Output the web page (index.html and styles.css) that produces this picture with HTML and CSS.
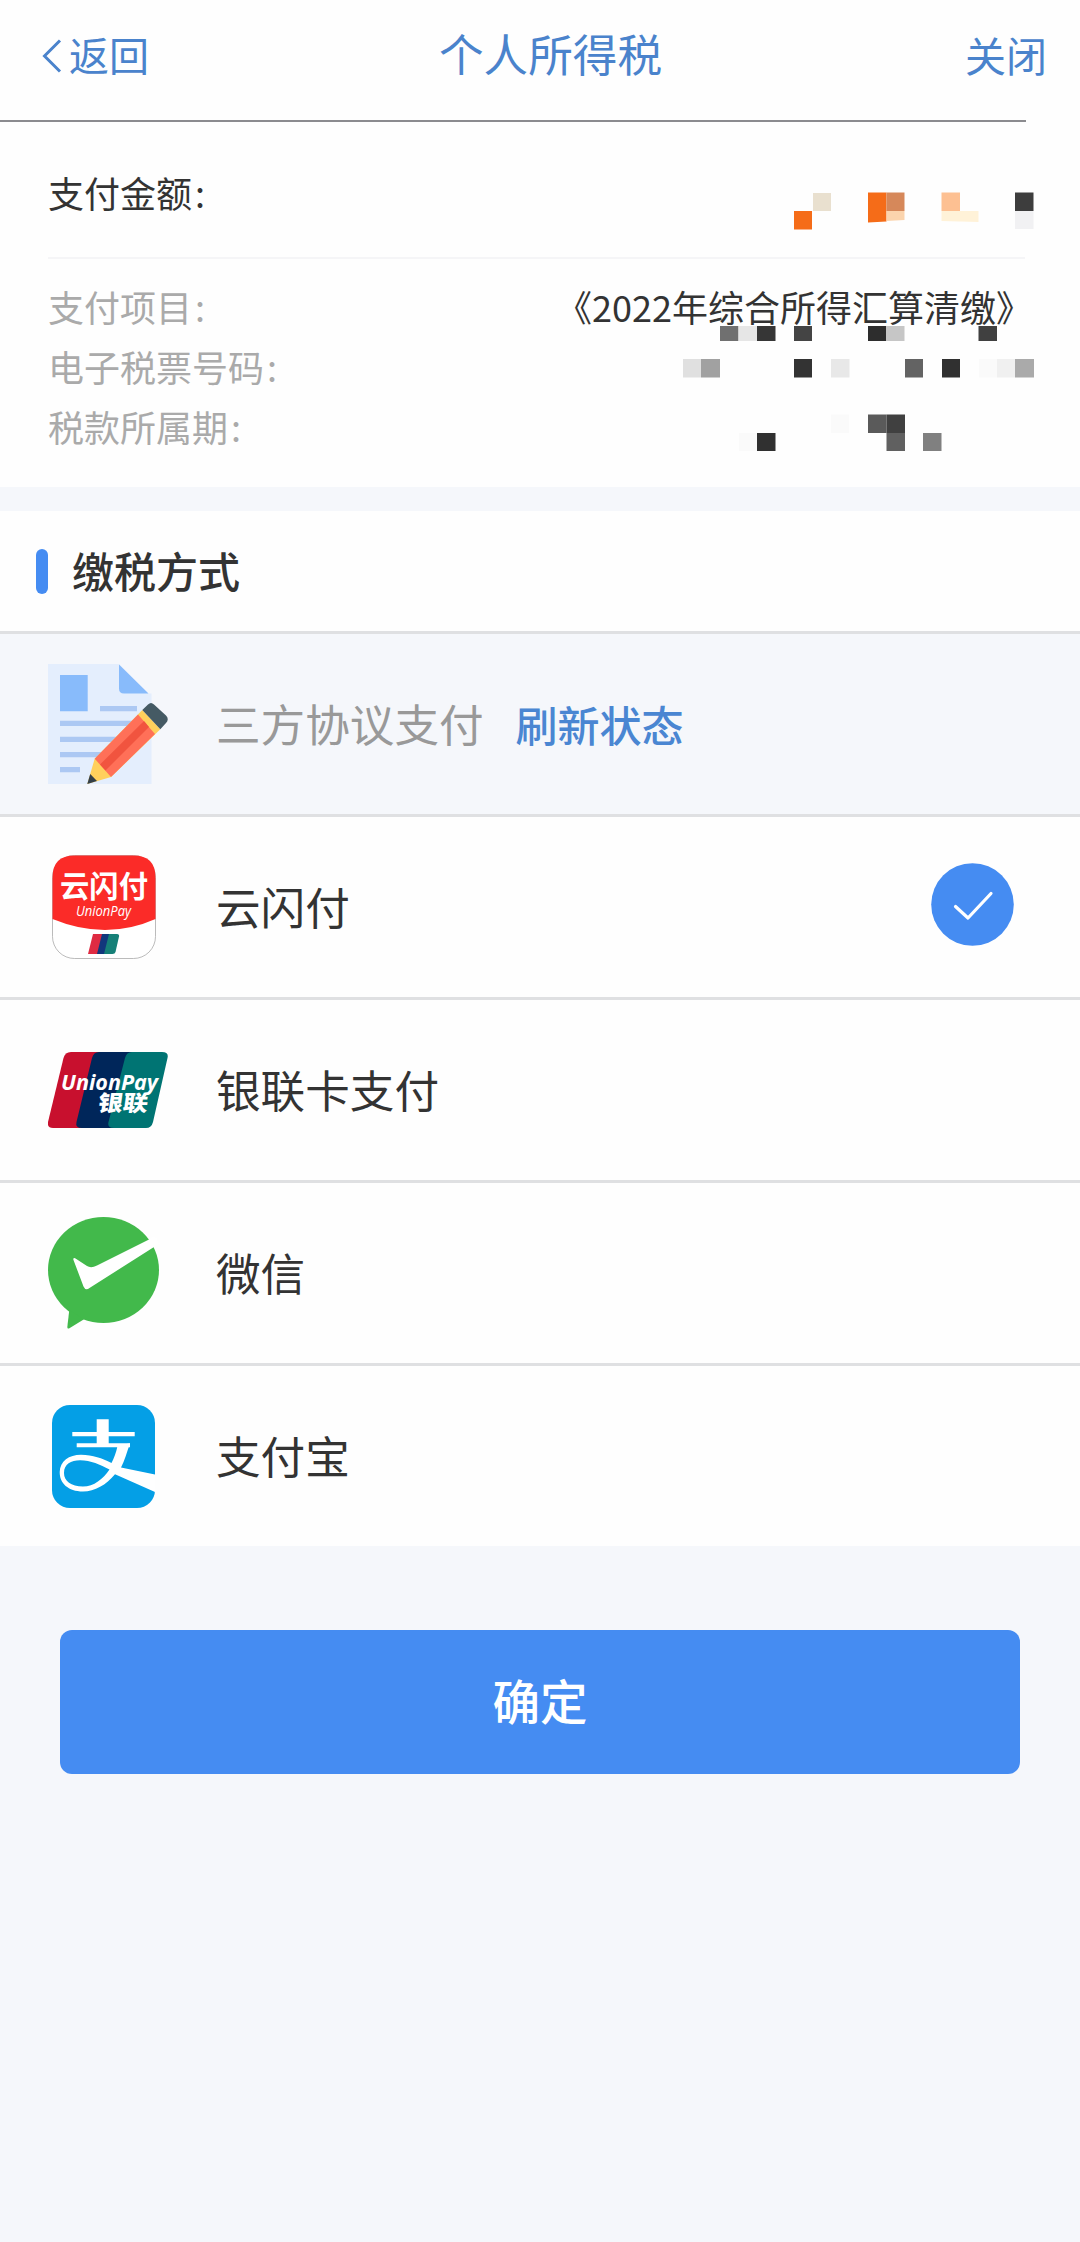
FILE: index.html
```html
<!DOCTYPE html>
<html lang="zh-CN">
<head>
<meta charset="utf-8">
<title>个人所得税</title>
<link rel="stylesheet" href="styles.css">
</head>
<body>
<header class="header">
  <a class="back"><svg class="chevron" viewBox="0 0 20 34"><path d="M18 1.5 2.5 17 18 32.500"/></svg><span>返回</span></a>
  <h1 class="header-title">个人所得税</h1>
  <a class="close">关闭</a>
</header>

<section class="summary">
  <div class="amount"><span>支付金额<span class="colon">:</span></span></div>
  <dl class="details">
    <div class="detail"><dt>支付项目<span class="colon">:</span></dt><dd>《2022年综合所得汇算清缴》</dd></div>
    <div class="detail"><dt>电子税票号码<span class="colon">:</span></dt><dd></dd></div>
    <div class="detail"><dt>税款所属期<span class="colon">:</span></dt><dd></dd></div>
  </dl>
  <svg class="mosaic" viewBox="660 180 400 290">
    <path fill="#e9e0cf" d="M813 193h18v18h-18z"/>
    <path fill="#f56c18" d="M794 211h18v18.500h-18zM868 192.500h18.500v29l-18.500 1z"/>
    <path fill="#d6885a" d="M886.500 192.500h18v18.500h-18z"/>
    <path fill="#fbd4ad" d="M886.500 211h18v9l-18 1z"/>
    <path fill="#fdc092" d="M941.500 192.500h18.500v18.500h-18.500z"/>
    <path fill="#fff2d8" d="M941.500 211h37v11l-37-1z"/>
    <path fill="#3d3d3d" d="M1015 192.500h18.500v18.500h-18.500z"/>
    <path fill="#f1f1f3" d="M1015 211h18.500v18h-18.500z"/>
    <path fill="#707070" d="M720 326h18.500v15h-18.500z"/>
    <path fill="#e6e6e6" d="M738.500 326h18.500v15h-18.500z"/>
    <path fill="#363636" d="M757 326h18.500v15h-18.500z"/>
    <path fill="#444" d="M794 326h18v15h-18z"/>
    <path fill="#2d2d2d" d="M868 326h18v15h-18z"/>
    <path fill="#c6c6c6" d="M886 326h18.500v15h-18.500z"/>
    <path fill="#404040" d="M978.500 326h18.500v15h-18.500z"/>
    <path fill="#e0e0e0" d="M683 359h18v18.500h-18z"/>
    <path fill="#a1a1a1" d="M701 359h19v18.500h-19z"/>
    <path fill="#333" d="M794 359h18v18.500h-18z"/>
    <path fill="#e8e8e8" d="M831 359h18.500v18.500h-18.500z"/>
    <path fill="#636363" d="M905 359h18v18.500h-18z"/>
    <path fill="#303030" d="M942 359h18v18.500h-18z"/>
    <path fill="#fafafa" d="M979 359h18v18.500h-18zM831 414.500h18v18.500h-18zM739 433h18v18h-18z"/>
    <path fill="#f0f0f0" d="M997 359h18v18.500h-18z"/>
    <path fill="#aaa" d="M1015 359h19v18.500h-19z"/>
    <path fill="#5a5a5a" d="M868 414.500h18.500v18.500h-18.500z"/>
    <path fill="#404040" d="M886.500 414.500h18.500v18.500h-18.500z"/>
    <path fill="#303030" d="M757 433h18.500v18h-18.500z"/>
    <path fill="#606060" d="M886.500 433h18.500v18h-18.500z"/>
    <path fill="#808080" d="M923 433h18.500v18h-18.500z"/>
  </svg>
</section>

<section class="methods">
  <h2 class="methods-title"><span>缴税方式</span></h2>
  <ul class="list">
    <li class="row row-disabled">
      <span class="icon">
        <svg width="120" height="120" viewBox="0 0 120 120">
          <path fill="#e4eefd" d="M0 0h71l29 29.500h3.500V120H0z"/>
          <path fill="#88bbfb" d="M71 .5 100.500 29.500H76q-5 0-5-5zM12 11h27.700v36.300H12z"/>
          <path fill="#acc8f3" d="M52 42h37v5.300H52zM12 56.700h75V62H12zM12 72.700h60V78H12zM12 88h46v5.300H12zM12 103h20v5.300H12z"/>
          <path fill="#ffd05c" d="M46.700 94.700 94.300 46 112.300 65.300 63 113 39.300 120z"/>
          <path fill="#ff7058" d="M46.700 94.700 90 50.500 107 70 63 113z"/>
          <path fill="#f1543f" d="M52 100.500 96 57 101 63 57.500 106.500z"/>
          <path fill="#455a64" d="M94.300 46 100 40.500q3-3 6 0L118 51.500q3.500 3.500 0 7.500L112.300 65.300z"/>
          <path fill="#333f48" d="M42.200 110 49 117 39.300 120z"/>
        </svg>
      </span>
      <span class="name">三方协议支付</span>
      <a class="refresh">刷新状态</a>
    </li>
    <li class="row">
      <span class="icon">
        <svg class="inset" width="104" height="104" viewBox="0 0 104 104">
          <rect x=".5" y=".5" width="103" height="103" rx="22" fill="#fff" stroke="#aaa" stroke-width=".8"/>
          <path fill="#fb2b28" d="M.5 64V22.500Q.5.500 22.500.500h59q22 0 22 22V64Q54 86 .5 64z"/>
          <text class="quick-cn" x="52" y="42" textLength="88" lengthAdjust="spacingAndGlyphs">云闪付</text>
          <text class="quick-en" x="24" y="61" textLength="55" lengthAdjust="spacingAndGlyphs">UnionPay</text>
          <path fill="#df2b42" d="M41 79h12l-5 20H36z"/>
          <path fill="#12377c" d="M50 79h10l-5 20H45z"/>
          <path fill="#168078" d="M57 79h8q2.500 0 2 2.500L63.500 97q-.5 2-3 2H52z"/>
        </svg>
      </span>
      <span class="name">云闪付</span>
      <svg class="checked" viewBox="0 0 83 83"><circle cx="41.500" cy="41.500" r="41.300"/><path d="M24.500 43.500 37 55 60 30.500"/></svg>
    </li>
    <li class="row">
      <span class="icon">
        <svg width="120" height="76" viewBox="0 0 120 76">
          <path fill="#c8102e" d="M23 0H60L40 76H5q-6 0-5-6L15.500 6Q17 0 23 0z"/>
          <path fill="#00265a" d="M51 0H90L70 76H34q-7 0-5.500-6L44 6Q45.500 0 51 0z"/>
          <path fill="#007473" d="M84 0H114q7 0 5.500 6L105 70q-1.500 6-7 6H66q-7 0-5.500-6L77 6Q78.500 0 84 0z"/>
          <text class="card-en" x="13" y="37.500" textLength="97" lengthAdjust="spacingAndGlyphs">UnionPay</text>
          <text class="card-cn" x="0" y="0" transform="translate(49 59) skewX(-8)" textLength="50" lengthAdjust="spacingAndGlyphs">银联</text>
        </svg>
      </span>
      <span class="name">银联卡支付</span>
    </li>
    <li class="row">
      <span class="icon">
        <svg width="112" height="112" viewBox="0 0 112 112">
          <ellipse cx="55.500" cy="53" rx="55.500" ry="53" fill="#42b94b"/>
          <path fill="#42b94b" d="M21.300 93 19.300 110q0 2.500 2.500 1L36 102.300z"/>
          <path fill="#fff" d="M25.300 42.500q0-2.500 3-.5L39 49q4 2.500 10-.5L101 22.500 107 19 112 27 106 30 41.500 71q-4 3-6-1.500z"/>
        </svg>
      </span>
      <span class="name">微信</span>
    </li>
    <li class="row">
      <span class="icon">
        <svg class="inset" width="103" height="103" viewBox="0 0 103 103">
          <rect width="103" height="103" rx="18" fill="#049fe6"/>
          <path fill="#fff" d="M20.300 27H44.700V14.300h12V27h26v4.300h-26v7H78v4H24.700v-4h20v-7H20.300z"/>
          <path fill="#fff" fill-rule="evenodd" d="M78 38.300C75 47 72.500 56 69 62.500L103 69.500V87L63 69.300C54 80 43 86.500 31 86.500 16 86.500 7.500 78 7.700 67 8 56 17 49.700 29 49.700 41 50 50 53 59.500 58 62 53 64 48 65.500 41zM12 68C12 76 19 81.500 31 81.500 42 81.500 51 74 57.500 64.500 48 59.500 39 55.500 28 55.300 19 55.300 12 59 12 68z"/>
        </svg>
      </span>
      <span class="name">支付宝</span>
    </li>
  </ul>
</section>

<button class="confirm">确定</button>
</body>
</html>
```
FILE: styles.css
```css
* { box-sizing: border-box; }
body {
  margin: 0;
  min-height: 2242px;
  background: #f5f7fb;
  color: #333;
  font-family: "Noto Sans CJK SC", sans-serif;
  font-size: 36px;
}
h1, h2, ul, dl, dd { margin: 0; padding: 0; }

.header {
  display: grid;
  grid-template-columns: 397px 1fr auto;
  align-items: center;
  height: 122px;
  padding: 0 33px 10px 42px;
  background: linear-gradient(#8b8b8f, #8b8b8f) left bottom / 1026px 2px no-repeat, #fefefe;
  color: #4a83cc;
  white-space: nowrap;
}
.back { display: flex; align-items: center; gap: 7px; font-size: 40px; line-height: 60px; }
.back span { padding-bottom: 5px; }
.chevron { width: 20px; height: 34px; fill: none; stroke: #4a83cc; stroke-width: 3; }
.header-title { padding-bottom: 6px; font-size: 44.6px; font-weight: 400; line-height: 66px; }
.close { padding-bottom: 5px; font-size: 41px; line-height: 60px; }

.summary { position: relative; height: 365px; padding: 0 48px; background: #fefefe; }
.amount {
  display: flex;
  align-items: center;
  height: 137px;
  margin-right: 7px;
  padding-top: 5px;
  border-bottom: 2px solid #f5f5f7;
}
.colon { margin-left: 3px; }
.details { padding-top: 17px; }
.detail { display: flex; justify-content: space-between; height: 60px; line-height: 60px; }
.detail dt { color: #aaa; }
.mosaic { position: absolute; left: 660px; top: 58px; width: 400px; height: 290px; }

.methods { margin-top: 24px; background: #fefefe; }
.methods-title {
  display: flex;
  align-items: center;
  gap: 24px;
  height: 120px;
  padding: 0 36px;
  font-size: 42px;
  font-weight: 500;
  line-height: 60px;
}
.methods-title span { padding-bottom: 3px; }
.methods-title::before { content: ""; width: 12px; height: 45px; border-radius: 6px; background: #458cf2; }
.list { list-style: none; }
.row {
  display: flex;
  align-items: center;
  height: 183px;
  padding: 0 66px 0 48px;
  border-top: 3px solid #dfe0e2;
}
.row-disabled { background: #f5f7fb; color: #999; }
.icon { display: flex; width: 168px; }
.icon svg { flex: none; }
.inset { margin-left: 4px; }
.name { padding-bottom: 2px; font-size: 44.6px; line-height: 66px; }
.refresh { margin-left: 32px; padding-bottom: 2px; color: #4a86d2; font-size: 42px; font-weight: 500; }
.checked { width: 83px; height: 83px; margin: 0 0 6px auto; }
.checked circle { fill: #458cf2; }
.checked path { fill: none; stroke: #fff; stroke-width: 3.2; stroke-linecap: round; stroke-linejoin: round; }

.quick-cn { fill: #fff; font-size: 30px; font-weight: 700; text-anchor: middle; }
.quick-en { fill: #fff; font: italic 14px "Open Sans", sans-serif; }
.card-en { fill: #fff; font: italic 700 22px "Open Sans", sans-serif; }
.card-cn { fill: #fff; font-size: 22px; font-weight: 900; }

.confirm {
  display: block;
  width: 960px;
  height: 144px;
  margin: 84px auto 0;
  padding: 0 0 6px;
  border: 0;
  border-radius: 12px;
  background: #458cf2;
  color: #fff;
  font: 500 47.500px "Noto Sans CJK SC", sans-serif;
}
```
